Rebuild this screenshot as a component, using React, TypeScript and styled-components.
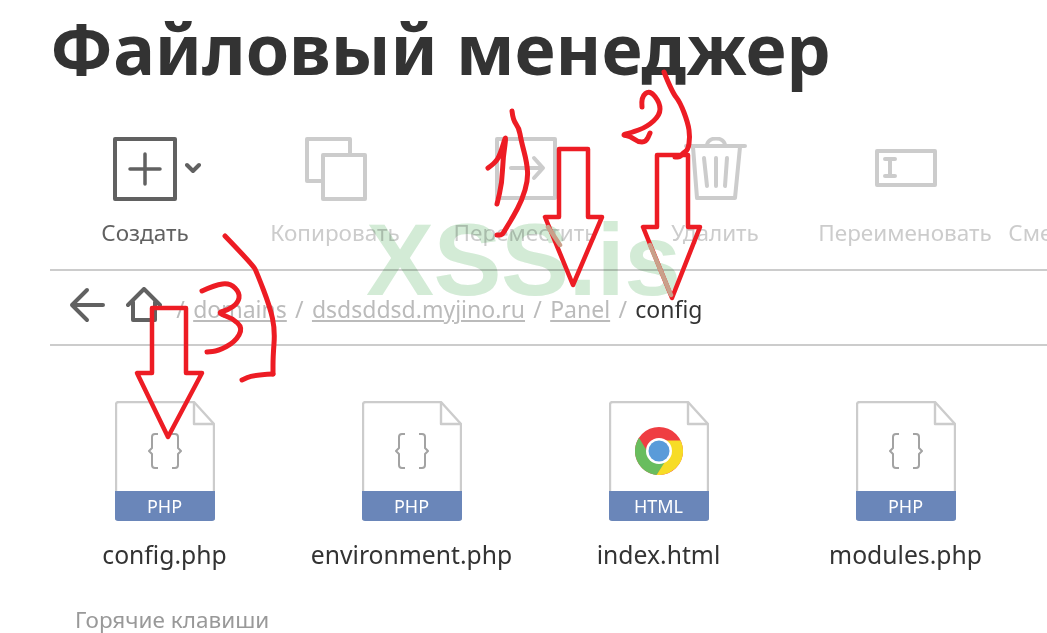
import React from "react";
import styled, { createGlobalStyle } from "styled-components";

const GlobalStyle = createGlobalStyle`
    html, body {
        margin: 0;
        padding: 0;
        height: 100%;
        overflow: hidden;
        background: #fff;
    }
    body {
        font-family: "Noto Sans", "Open Sans", sans-serif;
        color: #333;
    }
`;

const Page = styled.div`
    position: relative;
    width: 1047px;
    height: 633px;
    overflow: hidden;
`;

const Content = styled.div`
    padding-left: 50px;
`;

const Title = styled.h1`
    margin: 0;
    height: 137px;
    font-size: 70px;
    line-height: 96px;
    font-weight: 700;
    color: #333;
    white-space: nowrap;
`;

const Toolbar = styled.div`
    display: flex;
    height: 132px;
`;

const ToolButton = styled.div<{ $disabled?: boolean }>`
    flex: 0 0 190px;
    display: flex;
    flex-direction: column;
    align-items: center;
    color: ${(p) => (p.$disabled ? "#ccc" : "#616161")};
    white-space: nowrap;

    &:last-child {
        flex-basis: 182px;
    }
`;

const ToolIcon = styled.div`
    position: relative;
    width: 64px;
    height: 64px;
    margin-bottom: 17px;
`;

const ToolLabel = styled.span`
    font-size: 22.5px;
    line-height: 30px;
`;

const Chevron = styled.svg`
    position: absolute;
    left: 72px;
    top: 25px;
`;

const Crumbs = styled.div`
    display: flex;
    align-items: center;
    height: 71px;
    padding: 2px 0 0 19px;
    border-top: 2px solid #ccc;
    border-bottom: 2px solid #ccc;
    font-size: 23px;
`;

const CrumbNav = styled.div`
    display: flex;
    align-items: center;
    gap: 21px;
    margin-right: 6px;
    padding-bottom: 8px;
`;

const Crumb = styled.a`
    color: #bbb;
    text-decoration: underline;
`;

const Separator = styled.span`
    color: #bbb;
    margin: 0 8.3px;
`;

const Current = styled.span`
    color: #333;
`;

const FileGrid = styled.div`
    display: grid;
    grid-template-columns: repeat(4, 247px);
    margin: 55px 0 0 -9px;
`;

const FileCard = styled.div`
    display: flex;
    flex-direction: column;
    align-items: center;
`;

const FileIcon = styled.div`
    position: relative;
    width: 100px;
    height: 120px;
`;

const FileBadge = styled.span`
    position: absolute;
    left: 0;
    right: 0;
    bottom: 0;
    height: 30px;
    border-radius: 0 0 3px 3px;
    background: #6a86b9;
    color: #fff;
    font-size: 18px;
    line-height: 30px;
    text-align: center;
`;

const FileName = styled.div`
    margin-top: 18px;
    font-size: 24.7px;
    line-height: 32px;
    color: #333;
`;

const Hotkeys = styled.div`
    margin: 35px 0 0 25px;
    font-size: 22.5px;
    line-height: 28px;
    color: #999;
`;

const Watermark = styled.div`
    position: absolute;
    left: 366px;
    top: 200px;
    font-family: "Liberation Sans", Arial, sans-serif;
    font-size: 102px;
    line-height: 120px;
    letter-spacing: -0.5px;
    font-weight: 700;
    color: #d3ebd6;
    mix-blend-mode: multiply;
    pointer-events: none;
`;

const Annotations = styled.svg`
    position: absolute;
    left: 0;
    top: 0;
    pointer-events: none;
`;

const CreateIcon = () => (
    <svg width="64" height="64" viewBox="0 0 64 64" fill="none" stroke="currentColor" strokeWidth="4" strokeLinejoin="round" strokeLinecap="round">
        <rect x="2" y="2" width="60" height="60" />
        <path d="M32 17v30M17 32h30" strokeWidth="3.5" />
    </svg>
);

const CopyIcon = () => (
    <svg width="64" height="64" viewBox="0 0 64 64" fill="none" stroke="currentColor" strokeWidth="4" strokeLinejoin="round">
        <path d="M20 44H4V2h43v16" />
        <rect x="20" y="18" width="42" height="44" />
    </svg>
);

const MoveIcon = () => (
    <svg width="64" height="64" viewBox="0 0 64 64" fill="none" stroke="currentColor" strokeWidth="4" strokeLinejoin="round" strokeLinecap="round">
        <rect x="4" y="2" width="58" height="59" />
        <path d="M18 31h31M41 21l9 10-9 10" />
    </svg>
);

const TrashIcon = () => (
    <svg width="64" height="64" viewBox="0 0 64 64" fill="none" stroke="currentColor" strokeWidth="4" strokeLinejoin="round" strokeLinecap="round">
        <path d="M3 9h59M24 9c0-10 18-10 18 0M10 10l4 51h38l5-51" />
        <path d="M21 21l3 28M33 21v28M44 21l-2 28" />
    </svg>
);

const RenameIcon = () => (
    <svg width="64" height="64" viewBox="0 0 64 64" fill="none" stroke="currentColor" strokeWidth="4" strokeLinejoin="round" strokeLinecap="round">
        <rect x="4" y="14" width="58" height="34" />
        <path d="M12 22h10M12 39h10M17 22v17" />
    </svg>
);

const BackIcon = () => (
    <svg width="36" height="36" viewBox="0 0 36 36" fill="none" stroke="#616161" strokeWidth="4" strokeLinecap="round" strokeLinejoin="round">
        <path d="M34 18H3M18 3L3 18l15 15" />
    </svg>
);

const HomeIcon = () => (
    <svg width="36" height="36" viewBox="0 0 36 36" fill="none" stroke="#616161" strokeWidth="4" strokeLinecap="round" strokeLinejoin="round">
        <path d="M2 18L18 2l16 16M7 15v18h22V15" />
    </svg>
);

const FileSheet = () => (
    <g fill="none" stroke="#ccc" strokeWidth="2.4" strokeLinejoin="round">
        <path d="M1 119V4q0-3 3-3h75l20 22v96" />
        <path d="M79 1v22h20" />
    </g>
);

const Braces = () => (
    <svg x="33" y="31" width="34" height="38" viewBox="0 0 34 38" fill="none" stroke="#a3a3a3" strokeWidth="2" strokeLinejoin="round">
        <path d="M10 2H7Q4 2 4 5v11l-3 3 3 3v11q0 3 3 3h3" />
        <path d="M24 2h3q3 0 3 3v11l3 3-3 3v11q0 3-3 3h-3" />
    </svg>
);

const ChromeLogo = () => (
    <svg x="26" y="26" width="48" height="48" viewBox="0 0 48 48">
        <circle cx="24" cy="24" r="24" fill="#ef3d42" />
        <path d="M4 10.7A24 24 0 0 0 21.6 47.9L33 32 15 29z" fill="#69bd5e" />
        <path d="M45.6 13.5A24 24 0 0 1 21.6 47.9L33 30 24 13.5z" fill="#f7dc26" />
        <circle cx="24" cy="24" r="13" fill="#fff" />
        <circle cx="24" cy="24" r="10.5" fill="#5a9bd9" />
    </svg>
);

// smooths a hand drawn stroke through midpoints of its points
function scribble(points: number[][]) {
    let d = `M${points[0][0]} ${points[0][1]}`;
    for (let i = 1; i < points.length - 1; i++) {
        const [x, y] = points[i];
        const [nx, ny] = points[i + 1];
        d += `Q${x} ${y} ${(x + nx) / 2} ${(y + ny) / 2}`;
    }
    const last = points[points.length - 1];
    return d + `L${last[0]} ${last[1]}`;
}

const strokes = [
    [[512, 111], [513, 120], [519, 128], [521, 140], [527, 163], [528, 180], [522, 200], [513, 217], [505, 230], [502, 235], [497, 235]],
    [[488, 168], [495, 163], [500, 155], [507, 132], [503, 157], [502, 183], [497, 204]],
    [[642, 107], [641, 97], [650, 90], [660, 103], [660, 115], [647, 127], [630, 133], [622, 135], [630, 136], [638, 142], [646, 142], [650, 133]],
    [[664, 72], [672, 92], [680, 102], [688, 123], [690, 137], [688, 150], [683, 153], [680, 157], [675, 157]],
    [[202, 291], [215, 285], [230, 283], [240, 293], [238, 303], [228, 310], [217, 313], [232, 318], [243, 328], [235, 342], [218, 351], [207, 352]],
    [[225, 236], [253, 265], [257, 273], [270, 307], [275, 330], [273, 357], [273, 374]],
    [[273, 374], [253, 375], [242, 380]],
];

const files = [
    { name: "config.php", type: "PHP" },
    { name: "environment.php", type: "PHP" },
    { name: "index.html", type: "HTML" },
    { name: "modules.php", type: "PHP" },
];

const path = ["domains", "dsdsddsd.myjino.ru", "Panel"];

const tools = [
    { label: "Копировать", icon: <CopyIcon /> },
    { label: "Переместить", icon: <MoveIcon /> },
    { label: "Удалить", icon: <TrashIcon /> },
    { label: "Переименовать", icon: <RenameIcon /> },
    { label: "Сменить права", icon: null },
];

function App() {
    return (
        <Page>
            <GlobalStyle />
            <Content>
                <Title>Файловый менеджер</Title>
                <Toolbar>
                    <ToolButton>
                        <ToolIcon>
                            <CreateIcon />
                            <Chevron width="16" height="12" viewBox="0 0 16 12" fill="none" stroke="currentColor" strokeWidth="4" strokeLinecap="round" strokeLinejoin="round">
                                <path d="M2 3l6 6 6-6" />
                            </Chevron>
                        </ToolIcon>
                        <ToolLabel>Создать</ToolLabel>
                    </ToolButton>
                    {tools.map((t) => (
                        <ToolButton $disabled key={t.label}>
                            <ToolIcon>{t.icon}</ToolIcon>
                            <ToolLabel>{t.label}</ToolLabel>
                        </ToolButton>
                    ))}
                </Toolbar>
                <Crumbs>
                    <CrumbNav>
                        <BackIcon />
                        <HomeIcon />
                    </CrumbNav>
                    <Separator>/</Separator>
                    {path.map((p) => (
                        <React.Fragment key={p}>
                            <Crumb>{p}</Crumb>
                            <Separator>/</Separator>
                        </React.Fragment>
                    ))}
                    <Current>config</Current>
                </Crumbs>
                <FileGrid>
                    {files.map((f) => (
                        <FileCard key={f.name}>
                            <FileIcon>
                                <svg width="100" height="120" viewBox="0 0 100 120">
                                    <FileSheet />
                                    {f.type === "HTML" ? <ChromeLogo /> : <Braces />}
                                </svg>
                                <FileBadge>{f.type}</FileBadge>
                            </FileIcon>
                            <FileName>{f.name}</FileName>
                        </FileCard>
                    ))}
                </FileGrid>
                <Hotkeys>Горячие клавиши</Hotkeys>
            </Content>
            <Watermark>XSS.is</Watermark>
            <Annotations width="1047" height="633" viewBox="0 0 1047 633" fill="none" stroke="#ed1c24" strokeWidth="4.5" strokeLinejoin="round" strokeLinecap="round">
                <path d="M559 149h29v68h14l-29 68-28-68h14z" />
                <path d="M657 155h31v72h12l-28 71-29-71h14z" />
                <path d="M152 308h34v65h16l-34 64-31-64h15z" />
                <path d="M548 227l12 18M650 245l21 50" stroke="#c9a08a" />
                {strokes.map((s, i) => (
                    <path key={i} d={scribble(s)} strokeWidth="5" />
                ))}
            </Annotations>
        </Page>
    );
}

export default App;
